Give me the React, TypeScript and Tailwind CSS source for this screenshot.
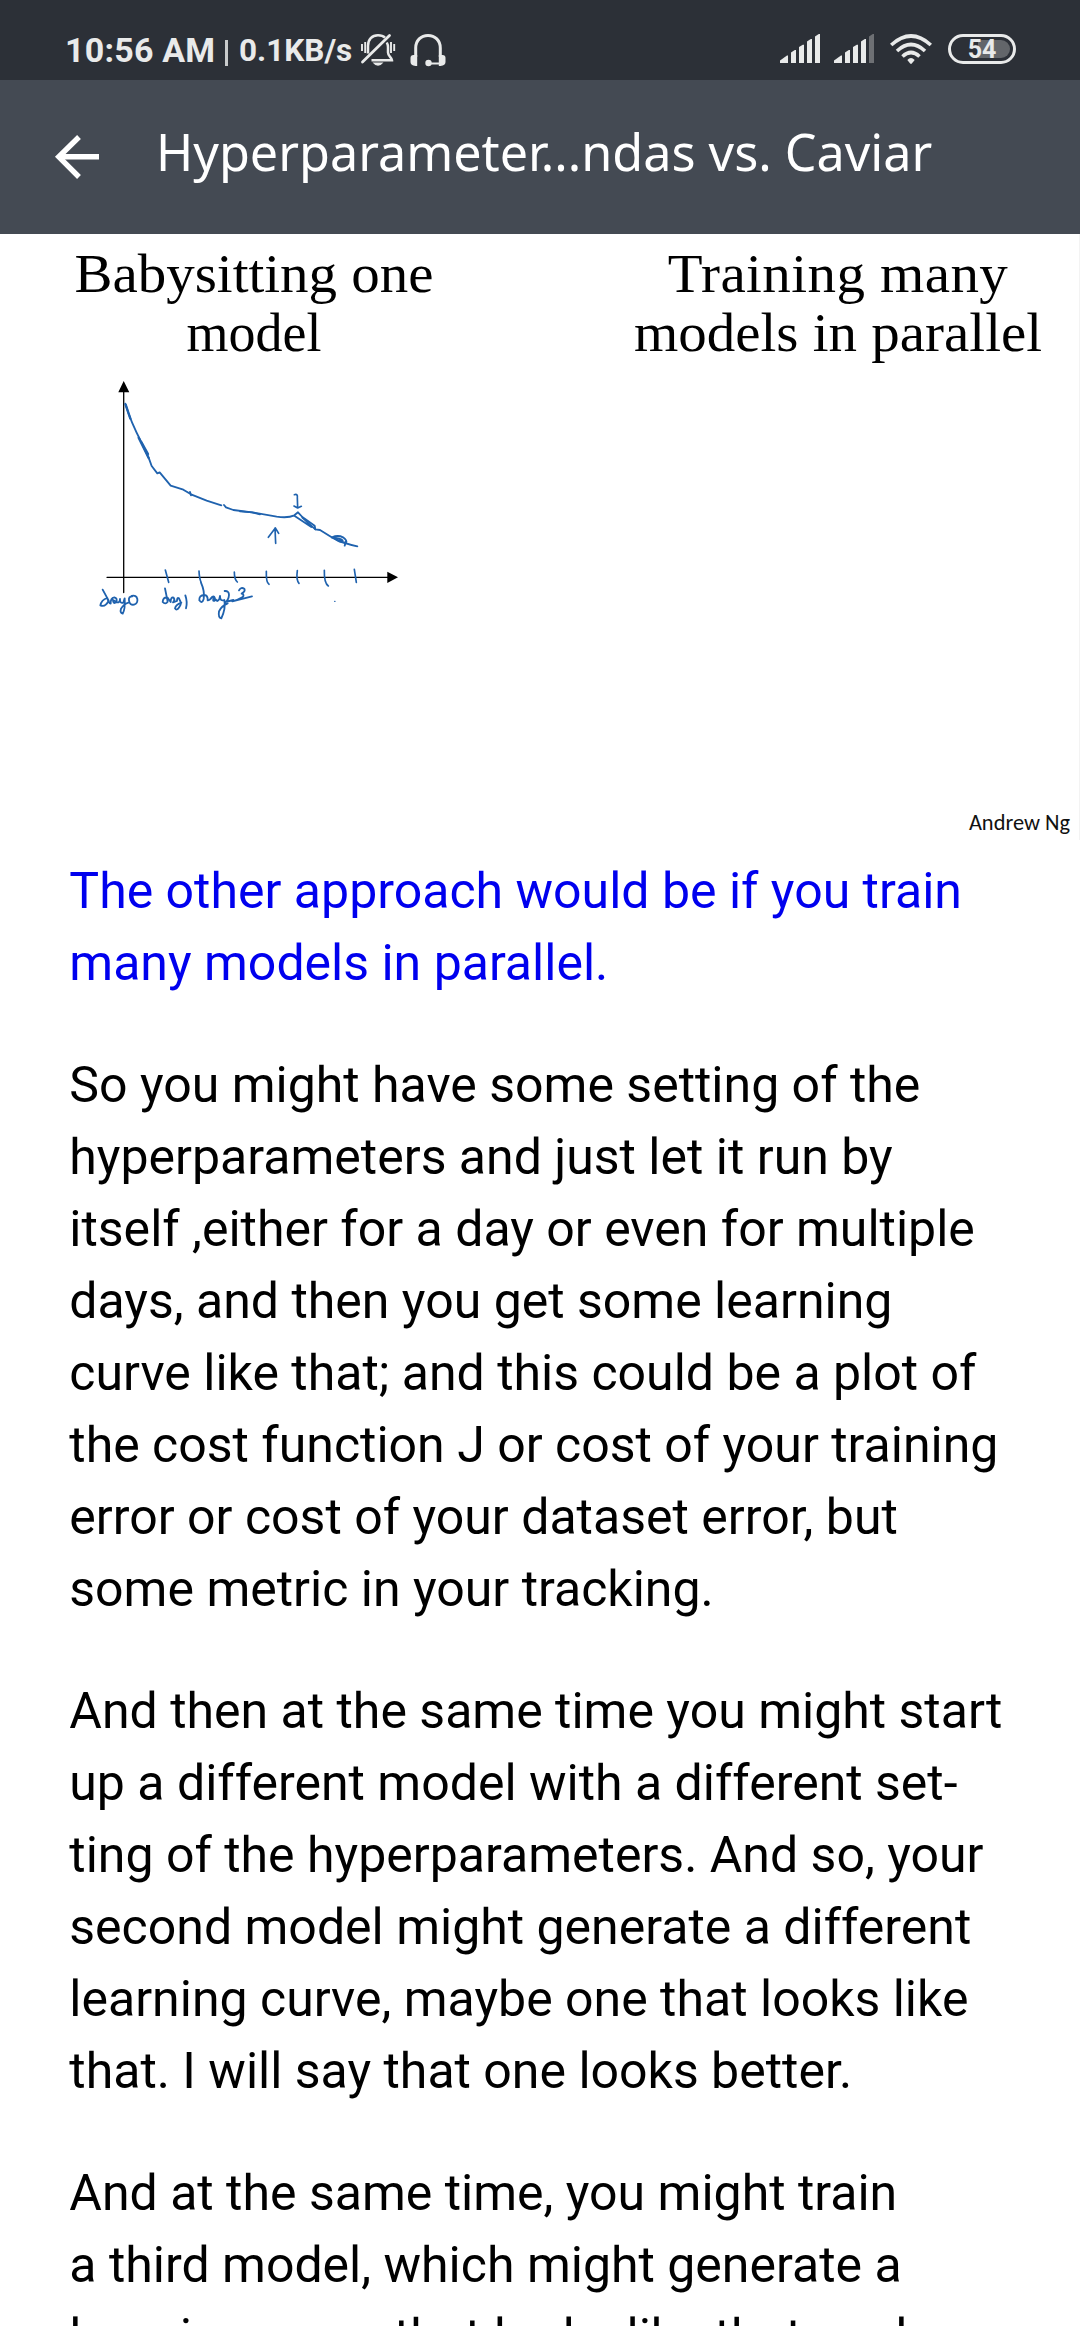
const paragraphs: { link?: boolean; lines: string[] }[] = [
  {
    link: true,
    lines: ['The other approach would be if you train', 'many models in parallel.'],
  },
  {
    lines: [
      'So you might have some setting of the',
      'hyperparameters and just let it run by',
      'itself ,either for a day or even for multiple',
      'days, and then you get some learning',
      'curve like that; and this could be a plot of',
      'the cost function J or cost of your training',
      'error or cost of your dataset error, but',
      'some metric in your tracking.',
    ],
  },
  {
    lines: [
      'And then at the same time you might start',
      'up a different model with a different set-',
      'ting of the hyperparameters. And so, your',
      'second model might generate a different',
      'learning curve, maybe one that looks like',
      'that. I will say that one looks better.',
    ],
  },
  {
    lines: [
      'And at the same time, you might train',
      'a third model, which might generate a',
      'learning curve that looks like that, and',
    ],
  },
];

function BellOff() {
  return (
    <svg className="ml-[8px] mt-[33px] h-[34px] w-[36px] shrink-0" viewBox="0 0 36 34" fill="none" stroke="#e9eaea" strokeWidth="2.5">
      <path d="M8 20.5 V13 C8 6.500 12 2.300 18 2.300 C21 2.300 23.500 3.200 25 4.700" />
      <path d="M26.800 9.500 C27.600 11 28 12 28 14 V19.500 C28 23.500 32 24.500 32 27.300 H11.500" />
      <path d="M2.500 29 L29.500 2.500" strokeWidth="2.800" strokeLinecap="round" />
      <path d="M2 11 V18 M5.200 9 V20 M31 9 V20 M34.200 11 V18" strokeWidth="1.900" />
      <path d="M12.500 29.500 H23.500 Q18 36 12.500 29.500 Z" fill="#e9eaea" stroke="none" />
    </svg>
  );
}

function Headset() {
  return (
    <svg className="ml-[14px] mt-[33px] h-[34px] w-[36px] shrink-0" viewBox="0 0 36 34" fill="none" stroke="#e9eaea">
      <path d="M5.700 24 V15 C5.700 7.500 11 2.500 18 2.500 C25 2.500 30.300 7.500 30.300 15 V24" strokeWidth="3" />
      <path d="M3.500 22 H7.200 V33 H5.500 Q0.500 32.500 0.500 29 V25 Q0.500 22 3.500 22 Z" fill="#e9eaea" stroke="none" />
      <path d="M32.500 22 H28.800 V33 H30.500 Q35.500 32.500 35.500 29 V25 Q35.500 22 32.500 22 Z" fill="#e9eaea" stroke="none" />
      <path d="M18 30.500 H30" strokeWidth="2" />
      <circle cx="18.500" cy="30" r="3.200" fill="#e9eaea" stroke="none" />
    </svg>
  );
}

function Signal({ weak = false }: { weak?: boolean }) {
  return (
    <svg className="h-[30px] w-[40px]" viewBox="0 0 40 30" fill="#e9eaea">
      <path d="M0 29 V26.500 L7 21.500 H8 V29 Z" />
      <path d="M11 29 V18.500 L14.800 16 H16 V29 Z" />
      <path d="M19 29 V13 L22.800 10.700 H24 V29 Z" />
      <path d="M27 29 V7.500 L30.800 5 H32 V29 Z" />
      <path d="M35 29 V2.500 L38.800 0 H40 V29 Z" fill={weak ? '#6e7074' : '#e9eaea'} />
    </svg>
  );
}

function Wifi() {
  return (
    <svg className="h-[30px] w-[42px]" viewBox="0 0 42 30" fill="none" stroke="#e9eaea" strokeWidth="3.600">
      <path d="M1.200 11 Q21 -7 40.800 11" />
      <path d="M7 17 Q21 4 35 17" />
      <path d="M12.500 22.500 Q21 14.500 29.500 22.500" />
      <path d="M17.300 26 Q21 22 24.700 26 L21.800 29.600 Q21 30.200 20.200 29.600 Z" fill="#e9eaea" stroke="none" />
    </svg>
  );
}

function StatusBar() {
  return (
    <div className="flex h-[80px] items-start bg-[#2c3037] font-['Roboto',sans-serif] font-bold text-[#e9eaea]">
      <span className="ml-[65px] mt-[30px] w-[160px] shrink-0 whitespace-nowrap text-[34px] leading-[40px] tracking-[0.2px]">10:56 AM</span>
      <span className="mt-[40px] h-[26px] w-[3px] shrink-0 bg-[#c9cbcc]" />
      <span className="ml-[11px] mt-[31px] w-[113px] shrink-0 whitespace-nowrap text-[31.500px] leading-[40px]">0.1KB/s</span>
      <BellOff />
      <Headset />
      <div className="ml-auto mr-[64px] mt-[34px] flex items-start">
        <Signal />
        <div className="ml-[14px]">
          <Signal weak />
        </div>
        <div className="ml-[16px]">
          <Wifi />
        </div>
        <div className="relative ml-[16px] flex h-[30px] w-[68px] items-center justify-center rounded-full border-[3px] border-[#e9eaea]">
          <span className="absolute right-[3px] top-[3px] h-[18px] w-[32px] rounded-r-full bg-[#63666a]" />
          <span className="relative mt-[2px] text-[25px] leading-[24px]">54</span>
        </div>
      </div>
    </div>
  );
}

function TitleBar() {
  return (
    <div className="flex h-[154px] items-start bg-[#444a53] text-white">
      <svg className="ml-[54px] mt-[54px] h-[46px] w-[46px] shrink-0" viewBox="0 0 46 46" fill="none" stroke="#fff" strokeWidth="5.400">
        <path d="M25 3 L4.800 22.800 L25 43" />
        <path d="M5 22.800 H45" />
      </svg>
      <h1 className="ml-[56px] mt-[37px] whitespace-nowrap font-['Noto_Sans',sans-serif] text-[50.300px] font-normal leading-[70px]">
        Hyperparameter...ndas vs. Caviar
      </h1>
    </div>
  );
}

function LearningCurve() {
  return (
    <svg className="ml-[80px] mt-[8px] h-[260px] w-[340px]" viewBox="80 370 340 260" fill="none" strokeLinecap="round" strokeLinejoin="round">
      <path d="M123.700 388 V592.500 M107 577.300 H390" stroke="#000" strokeWidth="1.300" />
      <path d="M123.700 381 L129.300 392.300 H118.300 Z M398 577.300 L387.300 571.700 V583 Z" fill="#000" />
      <g transform="translate(80 370) scale(.33333)" stroke="#1f62ae" strokeWidth="5.500">
        <path d="M136 101 C143 125 165 180 186 220 L207 266 L215 288 L232 310 L239 307 L272 347 L310 359 L333 373 L380 392 L424 406 M432 405 L438 412 L460 420 L516 427 L540 433" />
        <path d="M137 104 L151 146 M176 203 L206 264 M184 216 L204 252" strokeWidth="7" />
        <path d="M330 366 L333 376" />
        <path d="M256 600 L266 637 M357 603 Q358 625 363 636 M463 606 Q463 628 472 636" strokeWidth="5" />
        <path d="M68 659 L86 692 Q76 713 61 706 Q64 690 82 684 Q86 700 92 701 Q91 684 103 682 Q113 684 109 697 Q99 703 99 690 L111 697 Q119 699 120 687 Q119 701 130 698 L134 685 Q136 718 128 731 Q119 729 123 716 Q132 702 145 698" />
        <path d="M157 679 Q145 679 147 692 Q149 706 162 704 Q174 700 172 687 Q169 674 155 678" />
        <path d="M255 655 L263 695 Q256 705 248 696 Q249 680 263 683 L272 696 Q272 680 281 683 Q286 690 279 697 L291 693 Q291 681 297 685 L300 692 Q306 700 298 711 Q290 724 285 715 Q287 705 304 698 M316 676 Q323 696 318 715" />
        <path d="M363 638 Q375 665 371 687 Q366 703 358 691 Q357 676 373 675 Q384 676 383 691 Q390 691 396 681 Q405 675 405 691 Q396 696 401 683 L412 693 Q419 690 420 678 Q420 695 433 690 Q438 715 424 745 Q414 743 417 724 Q424 708 443 700" />
        <path d="M434 663 Q447 662 447 675 Q446 690 436 696 L460 690 M477 661 Q483 650 493 656 Q497 664 485 671 Q495 674 487 682 Q474 690 457 694 L516 679" />
      </g>
      <g transform="translate(240 470) scale(.33333)" stroke="#1f62ae" strokeWidth="5.500">
        <path d="M0 124 L37 127 L110 140 Q145 145 163 136 L174 127 L187 141 L224 167 L226 178 L240 180 L275 202 Q310 220 352 229" />
        <path d="M163 137 L214 171 M187 143 L226 178" />
        <path d="M276 202 Q294 194 309 202 Q323 212 318 218 Q300 219 282 204 Q300 204 308 211 L295 212 M318 213 L314 227" />
        <path d="M107 220 L105 174 M85 202 L106 174 L116 190" strokeWidth="5" />
        <path d="M163 74 Q174 70 172 84 L173 113 M162 108 L173 114 L184 109" strokeWidth="5" />
        <path d="M79 304 Q78 338 87 343 M172 302 Q168 330 177 340 M253 301 Q252 340 265 348 M343 298 L349 337" strokeWidth="5" />
        <path d="M284 394 h1" strokeWidth="4" />
      </g>
    </svg>
  );
}

function Slide() {
  return (
    <section className="flex h-[606px] flex-col border-r border-[#f3f3f3] pt-[11px]">
      <div className="flex font-['Liberation_Serif',serif] text-[54px] leading-[58.500px] text-black">
        <div className="ml-[53px] w-[402px] text-center">
          <div className="scale-x-[1.055]">Babysitting one</div>
          <div>model</div>
        </div>
        <div className="ml-[142px] w-[482px] shrink-0 text-center">
          <div className="scale-x-[1.055] tracking-[0.400px]">Training many</div>
          <div className="scale-x-[1.055]">models in parallel</div>
        </div>
      </div>
      <LearningCurve />
      <div className="mr-[9px] mt-auto pb-[5px] text-right font-['Carlito','Lato',sans-serif] text-[22.400px] leading-[25px] text-[#111]">Andrew Ng</div>
    </section>
  );
}

export default function App() {
  return (
    <div className="h-[2340px] w-[1080px] overflow-hidden bg-white">
      <StatusBar />
      <TitleBar />
      <main className="h-[2092px] overflow-hidden">
        <Slide />
        <article className="space-y-[50px] pl-[69.300px] pt-[15px] font-['Roboto',sans-serif] text-[50px] leading-[72px] text-black">
          {paragraphs.map((p) => (
            <p key={p.lines[0]} className={p.link ? 'text-[#0000ee]' : undefined}>
              {p.lines.map((line) => (
                <span key={line} className="block whitespace-nowrap">
                  {line}
                </span>
              ))}
            </p>
          ))}
        </article>
      </main>
    </div>
  );
}
